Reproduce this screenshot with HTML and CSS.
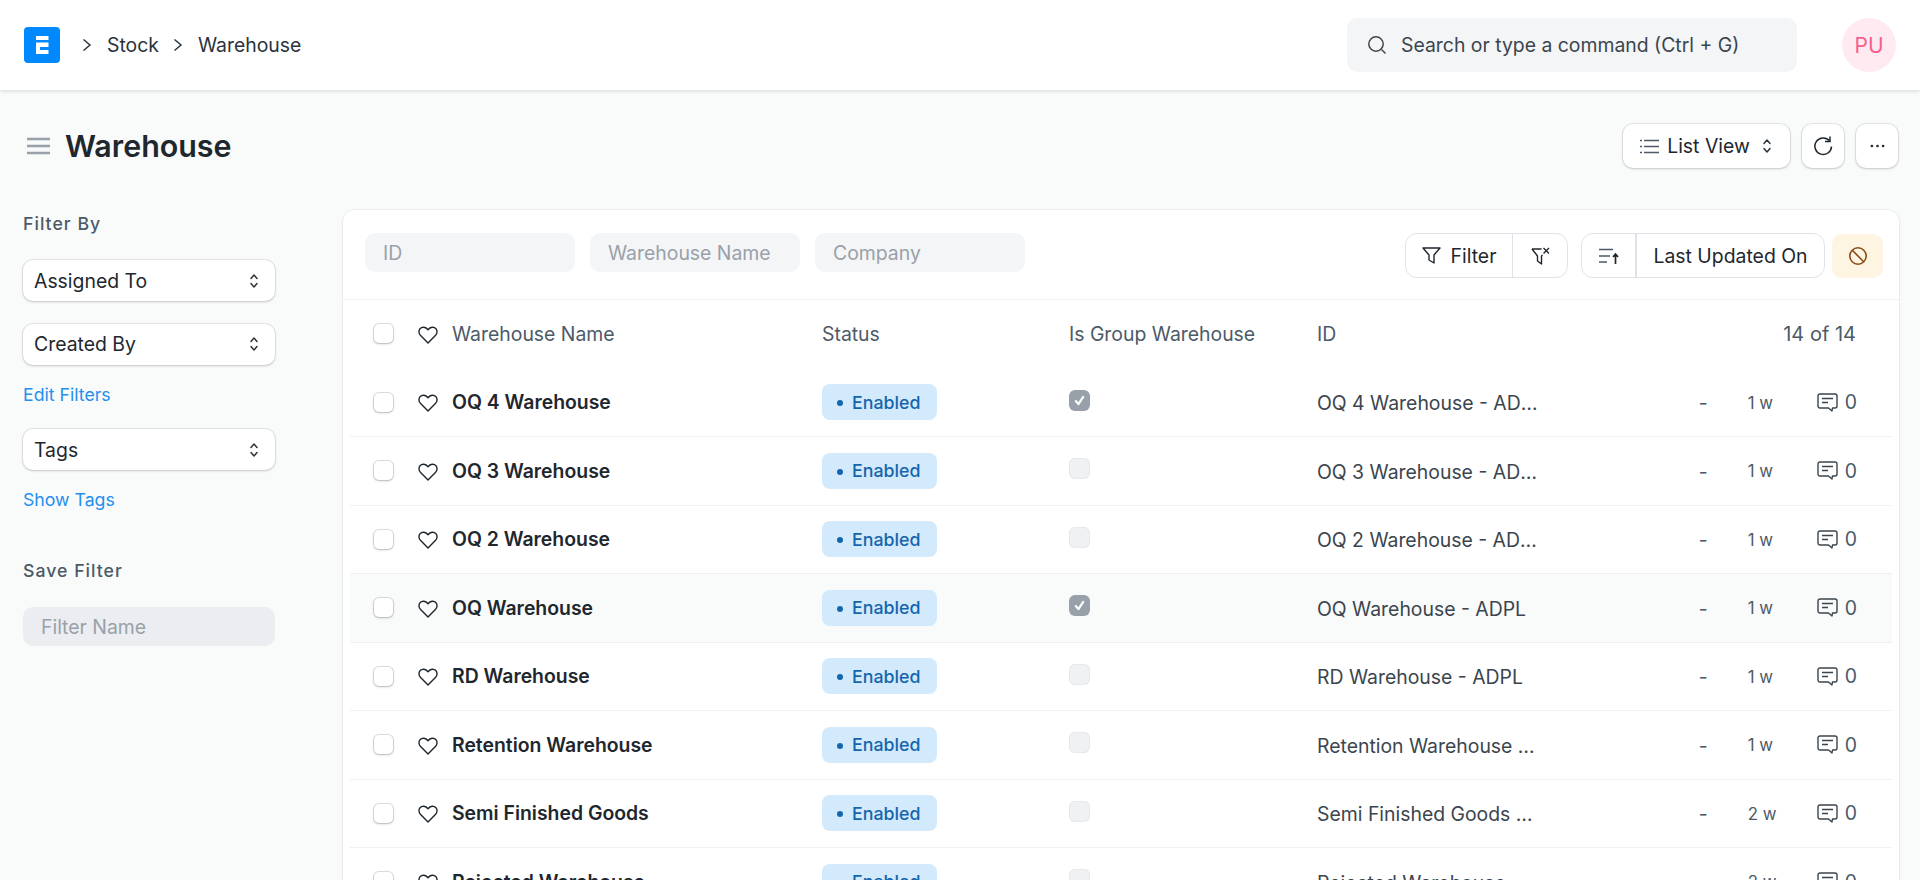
FILE: index.html
```html
<!DOCTYPE html>
<html lang="en">
<head>
<meta charset="utf-8">
<title>Warehouse</title>
<link rel="stylesheet" href="styles.css">
</head>
<body>
<svg class="defs" width="0" height="0" aria-hidden="true">
  <symbol id="heart" viewBox="0 0 20 18"><path d="M10 17 2.600 9.600C.5 7.500.5 4.300 2.200 2.500 4.100.6 7.600.6 10 3.700c2.400-3.100 5.900-3.100 7.800-1.200 1.700 1.800 1.700 5-.4 7.100z" fill="none" stroke="currentColor" stroke-width="1.400" stroke-linejoin="round"/></symbol>
  <symbol id="updown" viewBox="0 0 12 20"><path d="M3 7.500 6 4l3 3.500M3 12.500 6 16l3-3.500" fill="none" stroke="currentColor" stroke-width="1.500" stroke-linecap="round" stroke-linejoin="round"/></symbol>
  <symbol id="comment" viewBox="0 0 21 19"><path d="M3 1h15a2 2 0 0 1 2 2v10a2 2 0 0 1-2 2h-2.500l-.5 3-3.500-3H3a2 2 0 0 1-2-2V3a2 2 0 0 1 2-2z" fill="none" stroke="currentColor" stroke-width="1.400" stroke-linejoin="round"/><path d="M5 5.500h11M5 9.500h6" fill="none" stroke="currentColor" stroke-width="1.400"/></symbol>
  <symbol id="tick" viewBox="0 0 20 20"><path d="m6.500 10.500 2.500 3 4.500-7" fill="none" stroke="#fff" stroke-width="2" stroke-linecap="round" stroke-linejoin="round"/></symbol>
</svg>

<header class="navbar">
  <svg class="logo" viewBox="0 0 36 36" aria-label="ERPNext"><rect width="36" height="36" rx="4" fill="#0089ff"/><path d="M12 9h12.500v4H12zM12 15.500h12.500V20H16v3h8.500v4H12z" fill="#fff"/></svg>
  <nav class="crumbs">
    <svg class="chev" viewBox="0 0 12 16"><path d="m2.500 2.500 6.500 5.500-6.500 5.500" fill="none" stroke="currentColor" stroke-width="1.500"/></svg>
    <a class="crumb">Stock</a>
    <svg class="chev" viewBox="0 0 12 16"><path d="m2.500 2.500 6.500 5.500-6.500 5.500" fill="none" stroke="currentColor" stroke-width="1.500"/></svg>
    <a class="crumb">Warehouse</a>
  </nav>
  <div class="search">
    <svg class="search-icon" viewBox="0 0 20 20"><circle cx="9" cy="9" r="7.200" fill="none" stroke="currentColor" stroke-width="1.500"/><path d="m14.500 14.500 4 4" fill="none" stroke="currentColor" stroke-width="1.500"/></svg>
    <span>Search or type a command (Ctrl + G)</span>
  </div>
  <div class="avatar">PU</div>
</header>

<section class="page-head">
  <div class="title-wrap">
    <svg class="menu-icon" viewBox="0 0 23 18"><path d="M0 2h23M0 9h23M0 16h23" stroke="#98a1a9" stroke-width="2.400" fill="none"/></svg>
    <h1>Warehouse</h1>
  </div>
  <div class="head-actions">
    <button class="btn list-view">
      <svg class="lv-icon" viewBox="0 0 19 15"><path d="M4 1.500h15M4 7.500h15M4 13.500h15" stroke="currentColor" stroke-width="1.500" fill="none"/><path d="M0 1.500h2M0 7.500h2M0 13.500h2" stroke="currentColor" stroke-width="1.500" fill="none"/></svg>
      <span>List View</span>
      <svg class="updown small"><use href="#updown"/></svg>
    </button>
    <button class="btn square">
      <svg class="refresh" viewBox="0 0 20 20"><path d="M16.500 4.800A8.300 8.300 0 1 0 18.500 10.500" fill="none" stroke="currentColor" stroke-width="1.500"/><path d="M17 .5v5h-5" fill="none" stroke="currentColor" stroke-width="1.500"/></svg>
    </button>
    <button class="btn square">
      <svg class="dots" viewBox="0 0 16 4"><circle cx="2" cy="2" r="1.400" fill="currentColor"/><circle cx="8" cy="2" r="1.400" fill="currentColor"/><circle cx="14" cy="2" r="1.400" fill="currentColor"/></svg>
    </button>
  </div>
</section>

<main class="layout">
  <aside class="sidebar">
    <h2 class="side-label first">Filter By</h2>
    <div class="select s-assigned"><span>Assigned To</span><svg class="updown"><use href="#updown"/></svg></div>
    <div class="select s-created"><span>Created By</span><svg class="updown"><use href="#updown"/></svg></div>
    <a class="side-link">Edit Filters</a>
    <div class="select s-tags"><span>Tags</span><svg class="updown"><use href="#updown"/></svg></div>
    <a class="side-link show-tags">Show Tags</a>
    <h2 class="side-label save">Save Filter</h2>
    <div class="filter-name">Filter Name</div>
  </aside>

  <section class="card">
    <div class="filters">
      <div class="std-input">ID</div>
      <div class="std-input">Warehouse Name</div>
      <div class="std-input">Company</div>
      <div class="filter-actions">
        <div class="btn-group filter-group">
          <div class="seg seg-filter">
            <svg class="funnel" viewBox="0 0 19 17"><path d="M1 1h17l-6 7v8l-5-3V8z" fill="none" stroke="currentColor" stroke-width="1.400" stroke-linejoin="round"/></svg>
            <span>Filter</span>
          </div>
          <div class="seg seg-clear">
            <svg class="funnel-x" viewBox="0 0 19 18"><path d="M1 2h9.500M11.500 8l-1 1v8l-4-3V9L1 2" fill="none" stroke="currentColor" stroke-width="1.400" stroke-linejoin="round"/><path d="m12.500 1 5.500 5.500M18 1l-5.500 5.500" stroke="currentColor" stroke-width="1.400" fill="none"/></svg>
          </div>
        </div>
        <div class="btn-group sort-group">
          <div class="seg seg-sort">
            <svg class="sort" viewBox="0 0 20 16"><path d="M0 1.500h14M0 8h11M0 14h8" stroke="#4c5a67" stroke-width="1.500" fill="none"/><path d="M16.500 16V6.500M14 9l2.500-3L19 9" stroke="#1f272e" stroke-width="1.700" fill="none"/></svg>
          </div>
          <div class="seg seg-label">Last Updated On</div>
        </div>
        <div class="warn">
          <svg class="ban" viewBox="0 0 20 20"><circle cx="10" cy="10" r="8.200" fill="none" stroke="currentColor" stroke-width="1.600"/><path d="m4.300 4.300 11.400 11.400" stroke="currentColor" stroke-width="1.600"/></svg>
        </div>
      </div>
    </div>

    <div class="list">
      <div class="row head">
        <div class="c-subject"><span class="check"></span><svg class="heart"><use href="#heart"/></svg><span>Warehouse Name</span></div>
        <div>Status</div>
        <div>Is Group Warehouse</div>
        <div>ID</div>
        <div class="count">14 of 14</div>
      </div>

      <div class="row item">
        <div class="c-subject"><span class="check"></span><svg class="heart"><use href="#heart"/></svg><b>OQ 4 Warehouse</b></div>
        <div><span class="badge">Enabled</span></div>
        <div><span class="ro on"><svg><use href="#tick"/></svg></span></div>
        <div class="clip">OQ 4 Warehouse - ADPL</div>
        <div class="meta"><span class="dash">-</span><span class="age">1 w</span><svg class="comment"><use href="#comment"/></svg><span class="cnt">0</span></div>
      </div>
      <div class="row item">
        <div class="c-subject"><span class="check"></span><svg class="heart"><use href="#heart"/></svg><b>OQ 3 Warehouse</b></div>
        <div><span class="badge">Enabled</span></div>
        <div><span class="ro"></span></div>
        <div class="clip">OQ 3 Warehouse - ADPL</div>
        <div class="meta"><span class="dash">-</span><span class="age">1 w</span><svg class="comment"><use href="#comment"/></svg><span class="cnt">0</span></div>
      </div>
      <div class="row item">
        <div class="c-subject"><span class="check"></span><svg class="heart"><use href="#heart"/></svg><b>OQ 2 Warehouse</b></div>
        <div><span class="badge">Enabled</span></div>
        <div><span class="ro"></span></div>
        <div class="clip">OQ 2 Warehouse - ADPL</div>
        <div class="meta"><span class="dash">-</span><span class="age">1 w</span><svg class="comment"><use href="#comment"/></svg><span class="cnt">0</span></div>
      </div>
      <div class="row item hover">
        <div class="c-subject"><span class="check"></span><svg class="heart"><use href="#heart"/></svg><b>OQ Warehouse</b></div>
        <div><span class="badge">Enabled</span></div>
        <div><span class="ro on"><svg><use href="#tick"/></svg></span></div>
        <div class="clip">OQ Warehouse - ADPL</div>
        <div class="meta"><span class="dash">-</span><span class="age">1 w</span><svg class="comment"><use href="#comment"/></svg><span class="cnt">0</span></div>
      </div>
      <div class="row item">
        <div class="c-subject"><span class="check"></span><svg class="heart"><use href="#heart"/></svg><b>RD Warehouse</b></div>
        <div><span class="badge">Enabled</span></div>
        <div><span class="ro"></span></div>
        <div class="clip">RD Warehouse - ADPL</div>
        <div class="meta"><span class="dash">-</span><span class="age">1 w</span><svg class="comment"><use href="#comment"/></svg><span class="cnt">0</span></div>
      </div>
      <div class="row item">
        <div class="c-subject"><span class="check"></span><svg class="heart"><use href="#heart"/></svg><b>Retention Warehouse</b></div>
        <div><span class="badge">Enabled</span></div>
        <div><span class="ro"></span></div>
        <div class="clip">Retention Warehouse - ADPL</div>
        <div class="meta"><span class="dash">-</span><span class="age">1 w</span><svg class="comment"><use href="#comment"/></svg><span class="cnt">0</span></div>
      </div>
      <div class="row item">
        <div class="c-subject"><span class="check"></span><svg class="heart"><use href="#heart"/></svg><b>Semi Finished Goods</b></div>
        <div><span class="badge">Enabled</span></div>
        <div><span class="ro"></span></div>
        <div class="clip">Semi Finished Goods - ADPL</div>
        <div class="meta"><span class="dash">-</span><span class="age">2 w</span><svg class="comment"><use href="#comment"/></svg><span class="cnt">0</span></div>
      </div>
      <div class="row item">
        <div class="c-subject"><span class="check"></span><svg class="heart"><use href="#heart"/></svg><b>Rejected Warehouse</b></div>
        <div><span class="badge">Enabled</span></div>
        <div><span class="ro"></span></div>
        <div class="clip">Rejected Warehouse - ADPL</div>
        <div class="meta"><span class="dash">-</span><span class="age">2 w</span><svg class="comment"><use href="#comment"/></svg><span class="cnt">0</span></div>
      </div>
    </div>
  </section>
</main>
</body>
</html>
```
FILE: styles.css
```css
* { box-sizing: border-box; }
html, body { margin: 0; height: 880px; overflow: hidden; }
body { background: #f9fafa; color: #1f272e; font-family: Inter, "Liberation Sans", sans-serif; font-size: 19.400px; }
.defs { position: absolute; }
h1, h2 { margin: 0; }

.navbar { height: 90px; background: #fff; display: flex; align-items: center; padding: 0 24px; box-shadow: 0 1px 4px rgba(25, 39, 52, .16); position: relative; }
.logo { width: 36px; height: 36px; flex: none; }
.crumbs { display: flex; align-items: center; margin-left: 21px; flex: 1; }
.chev { width: 12px; height: 16px; color: #2b343c; }
.crumb { color: #2a333b; margin-left: 14px; margin-right: 13px; }
.search { width: 450px; height: 54px; background: #f4f5f6; border-radius: 10px; display: flex; align-items: center; padding-left: 20px; color: #3b454e; }
.search-icon { width: 20px; height: 20px; margin-right: 14px; }
.avatar { width: 54px; height: 54px; margin-left: 45px; border-radius: 50%; background: #ffeaf1; color: #f5608f; display: flex; align-items: center; justify-content: center; font-size: 21px; }

.page-head { display: flex; justify-content: space-between; align-items: center; height: 94px; padding: 18px 22px 0 27px; }
.title-wrap { display: flex; align-items: center; }
.menu-icon { width: 23px; height: 18px; margin-right: 15px; }
h1 { font-size: 30.400px; font-weight: 600; }
.head-actions { display: flex; gap: 12px; }
.btn { height: 44px; background: #fff; border: 0; border-radius: 10px; box-shadow: 0 0 0 1px rgba(0, 0, 0, .07), 0 1px 3px rgba(0, 0, 0, .15); display: flex; align-items: center; justify-content: center; color: #1f272e; font: inherit; padding: 0; }
.list-view { width: 167px; }
.lv-icon { width: 19px; height: 15px; margin-right: 8px; color: #4c5a67; }
.updown { width: 12px; height: 20px; color: #2b343c; }
.updown.small { margin-left: 11px; }
.square { width: 42px; }
.refresh { width: 20px; height: 20px; }
.dots { width: 15px; height: 4px; }

.layout { display: grid; grid-template-columns: 343px 1556px; align-items: start; padding-top: 26px; }
.sidebar { padding: 0 68px 0 23px; display: flex; flex-direction: column; }
.side-label { font-size: 17.700px; line-height: 22px; font-weight: 500; letter-spacing: 1px; color: #4c5a67; }
.side-label.first { margin-top: 3px; }
.select { height: 41px; background: #fff; border-radius: 10px; box-shadow: 0 0 0 1px rgba(0, 0, 0, .07), 0 1px 3px rgba(0, 0, 0, .15); display: flex; align-items: center; justify-content: space-between; padding: 0 15px 0 11px; }
.s-assigned { margin-top: 25px; }
.s-created { margin-top: 22.500px; }
.s-tags { margin-top: 24.500px; }
.side-link { font-size: 17.700px; color: #2490ef; margin-top: 19px; }
.side-link.show-tags { margin-top: 19px; }
.side-label.save { margin-top: 50px; }
.filter-name { margin-top: 25px; height: 39px; border-radius: 10px; background: #ebedf0; color: #98a1a9; display: flex; align-items: center; padding-left: 18px; }

.card { height: 800px; background: #fff; border-radius: 12px; box-shadow: 0 0 0 1px rgba(0, 0, 0, .03), 0 1px 4px rgba(0, 0, 0, .06); }
.filters { height: 90px; display: flex; align-items: center; gap: 15px; padding: 0 16px 1px 22px; border-bottom: 1px solid #eef0f2; }
.std-input { width: 210px; height: 39px; margin-top: -3px; background: #f4f5f6; border-radius: 10px; display: flex; align-items: center; padding-left: 18px; color: #98a1a9; }
.filter-actions { margin-left: auto; margin-top: 3px; display: flex; align-items: center; }
.btn-group { height: 45px; display: flex; background: #fff; border: 1px solid #dfe3e7; border-radius: 12px; }
.seg { height: 100%; display: flex; align-items: center; justify-content: center; }
.seg-filter { width: 107px; border-right: 1px solid #dfe3e7; }
.funnel { width: 19px; height: 17px; margin-right: 10px; }
.seg-clear { width: 54px; }
.funnel-x { width: 19px; height: 18px; }
.sort-group { margin-left: 13px; }
.seg-sort { width: 55px; border-right: 2px solid #dfe3e7; }
.sort { width: 20px; height: 16px; }
.seg-label { width: 187px; }
.warn { width: 51px; height: 44px; margin-left: 7px; background: #fef4e2; border-radius: 10px; display: flex; align-items: center; justify-content: center; color: #8a4b16; }
.ban { width: 20px; height: 20px; }

.list { padding: 0 7px; }
.row { display: grid; align-items: center; padding-left: 23px; padding-right: 35px; }
.head { height: 68.500px; color: #4c5a67; padding-bottom: 1px; grid-template-columns: 449px 247px 248px 1fr auto; }
.item { height: 68.500px; border-bottom: 1px solid #eff1f3; color: #3b454e; grid-template-columns: 449px 247px 248px 224px 1fr; }
.item.hover { background: #f9fafa; }
.c-subject { display: flex; align-items: center; }
.c-subject b { font-weight: 600; color: #1f272e; }
.check { width: 19px; height: 19px; margin-left: 1px; border-radius: 5px; background: #fff; box-shadow: 0 0 0 1px rgba(0, 0, 0, .12), 0 1px 3px rgba(0, 0, 0, .18); flex: none; margin-right: 25px; }
.heart { width: 20px; height: 18px; margin-top: 2px; color: #1f272e; margin-right: 14px; flex: none; }
.badge { display: inline-flex; align-items: center; height: 36px; width: 115px; border-radius: 8px; background: #d3e9fc; color: #1366ae; font-size: 17.800px; font-weight: 500; padding-left: 30px; position: relative; }
.badge::before { content: ""; position: absolute; left: 15px; top: 16px; width: 6px; height: 6px; border-radius: 50%; background: #1366ae; }
.ro { display: block; width: 21px; height: 21px; margin-top: -4px; border-radius: 6px; background: #f0f1f3; box-shadow: inset 0 0 0 1px #e6e8eb; }
.ro.on { background: #98a1a9; box-shadow: none; }
.ro svg { display: block; width: 21px; height: 21px; }
.clip { padding-top: 2px; white-space: nowrap; overflow: hidden; text-overflow: ellipsis; }
.meta { display: flex; align-items: center; justify-content: flex-end; color: #4c5a67; }
.dash { margin-right: 40px; padding-top: 2px; }
.age { font-size: 16.800px; width: 26px; margin-right: 43px; white-space: nowrap; padding-top: 1px; }
.comment { width: 21px; height: 19px; color: #3b454e; margin-right: 7px; }
.count { color: #4c5a67; font-size: 20px; margin-right: 1px; }
```
